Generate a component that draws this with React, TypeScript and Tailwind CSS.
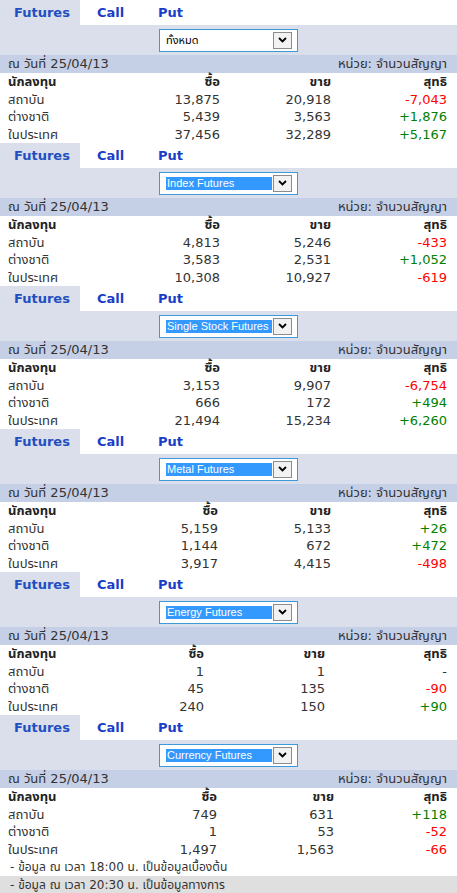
import React from 'react';

type Row = [string, string, string, string];

interface Block {
  option: string;
  selected: boolean;
  cols: string;
  rows: Row[];
}

const blocks: Block[] = [
  {
    option: 'ทั้งหมด',
    selected: false,
    cols: 'grid-cols-[140px_72px_111px_116px]',
    rows: [
      ['สถาบัน', '13,875', '20,918', '-7,043'],
      ['ต่างชาติ', '5,439', '3,563', '+1,876'],
      ['ในประเทศ', '37,456', '32,289', '+5,167'],
    ],
  },
  {
    option: 'Index Futures',
    selected: true,
    cols: 'grid-cols-[140px_72px_111px_116px]',
    rows: [
      ['สถาบัน', '4,813', '5,246', '-433'],
      ['ต่างชาติ', '3,583', '2,531', '+1,052'],
      ['ในประเทศ', '10,308', '10,927', '-619'],
    ],
  },
  {
    option: 'Single Stock Futures',
    selected: true,
    cols: 'grid-cols-[140px_72px_111px_116px]',
    rows: [
      ['สถาบัน', '3,153', '9,907', '-6,754'],
      ['ต่างชาติ', '666', '172', '+494'],
      ['ในประเทศ', '21,494', '15,234', '+6,260'],
    ],
  },
  {
    option: 'Metal Futures',
    selected: true,
    cols: 'grid-cols-[140px_70px_113px_116px]',
    rows: [
      ['สถาบัน', '5,159', '5,133', '+26'],
      ['ต่างชาติ', '1,144', '672', '+472'],
      ['ในประเทศ', '3,917', '4,415', '-498'],
    ],
  },
  {
    option: 'Energy Futures',
    selected: true,
    cols: 'grid-cols-[140px_56px_121px_122px]',
    rows: [
      ['สถาบัน', '1', '1', '-'],
      ['ต่างชาติ', '45', '135', '-90'],
      ['ในประเทศ', '240', '150', '+90'],
    ],
  },
  {
    option: 'Currency Futures',
    selected: true,
    cols: 'grid-cols-[140px_69px_117px_113px]',
    rows: [
      ['สถาบัน', '749', '631', '+118'],
      ['ต่างชาติ', '1', '53', '-52'],
      ['ในประเทศ', '1,497', '1,563', '-66'],
    ],
  },
];

const netColor = (v: string) => {
  if (v.startsWith('+')) return 'text-[#008000]';
  if (v.startsWith('-') && v.length > 1) return 'text-[#ff0000]';
  return 'text-[#333333]';
};

const Tabs = () => (
  <div className="flex h-[25px] items-center bg-white font-bold text-[13px]">
    <div className="flex h-full w-[80px] items-center bg-[#dadfeb] pl-[14px] text-[#1f4fc0]">
      Futures
    </div>
    <div className="w-[61px] pl-[17px] text-[#1a3ec7]">Call</div>
    <div className="pl-[17px] text-[#1a3ec7]">Put</div>
  </div>
);

const FakeSelect = ({ option, selected }: { option: string; selected: boolean }) => (
  <div className="flex h-[30px] items-center bg-[#dadfeb] pl-[159px]">
    <div className="flex h-[23px] w-[139px] items-center border border-[#3c9ad9] bg-white pl-[6px]">
      <div
        className={`flex h-[13px] w-[106px] items-center whitespace-nowrap font-['Liberation_Sans','Noto_Sans_Thai',sans-serif] text-[11px] leading-none ${
          selected ? 'bg-[#3399ff] pl-[1px] text-white' : 'text-black'
        }`}
      >
        {option}
      </div>
      <div className="ml-[1px] flex h-[17px] w-[19px] items-center justify-center border border-[#8c8c8c] bg-[#f2f2f2]">
        <svg width="9" height="6" viewBox="0 0 9 6">
          <path d="M1 1 L4.5 4.5 L8 1" fill="none" stroke="#000" strokeWidth="1.8" />
        </svg>
      </div>
    </div>
  </div>
);

const Section = ({ block }: { block: Block }) => (
  <div>
    <Tabs />
    <FakeSelect option={block.option} selected={block.selected} />
    <div className="flex h-[18px] items-center justify-between bg-[#c5cfe5] pl-[8px] pr-[10px] text-[13px] text-[#333333]">
      <span>ณ วันที่ 25/04/13</span>
      <span>หน่วย: จำนวนสัญญา</span>
    </div>
    <div className={`grid ${block.cols} pl-[8px] text-[13px]`}>
      <div className="flex h-[17.5px] items-center font-bold text-[#222222]">นักลงทุน</div>
      <div className="flex h-[17.5px] items-center justify-end font-bold text-[#222222]">ซื้อ</div>
      <div className="flex h-[17.5px] items-center justify-end font-bold text-[#222222]">ขาย</div>
      <div className="flex h-[17.5px] items-center justify-end font-bold text-[#222222]">สุทธิ</div>
      {block.rows.map((r, key) => (
        <React.Fragment key={key}>
          <div className="flex h-[17.5px] items-center text-[#333333]">{r[0]}</div>
          <div className="flex h-[17.5px] items-center justify-end text-[#333333]">{r[1]}</div>
          <div className="flex h-[17.5px] items-center justify-end text-[#333333]">{r[2]}</div>
          <div className={`flex h-[17.5px] items-center justify-end ${netColor(r[3])}`}>{r[3]}</div>
        </React.Fragment>
      ))}
    </div>
  </div>
);

export default function App() {
  return (
    <div className="w-[457px] bg-white font-['Tahoma','DejaVu_Sans','Noto_Sans_Thai',sans-serif]">
      {blocks.map((b, key) => (
        <Section key={key} block={b} />
      ))}
      <div className="flex h-[18px] items-center pl-[10px] text-[12px] text-[#333333]">
        - ข้อมูล ณ เวลา 18:00 น. เป็นข้อมูลเบื้องต้น
      </div>
      <div className="flex h-[18px] items-center bg-[#dfdfdf] pl-[10px] text-[12px] text-[#333333]">
        - ข้อมูล ณ เวลา 20:30 น. เป็นข้อมูลทางการ
      </div>
    </div>
  );
}
